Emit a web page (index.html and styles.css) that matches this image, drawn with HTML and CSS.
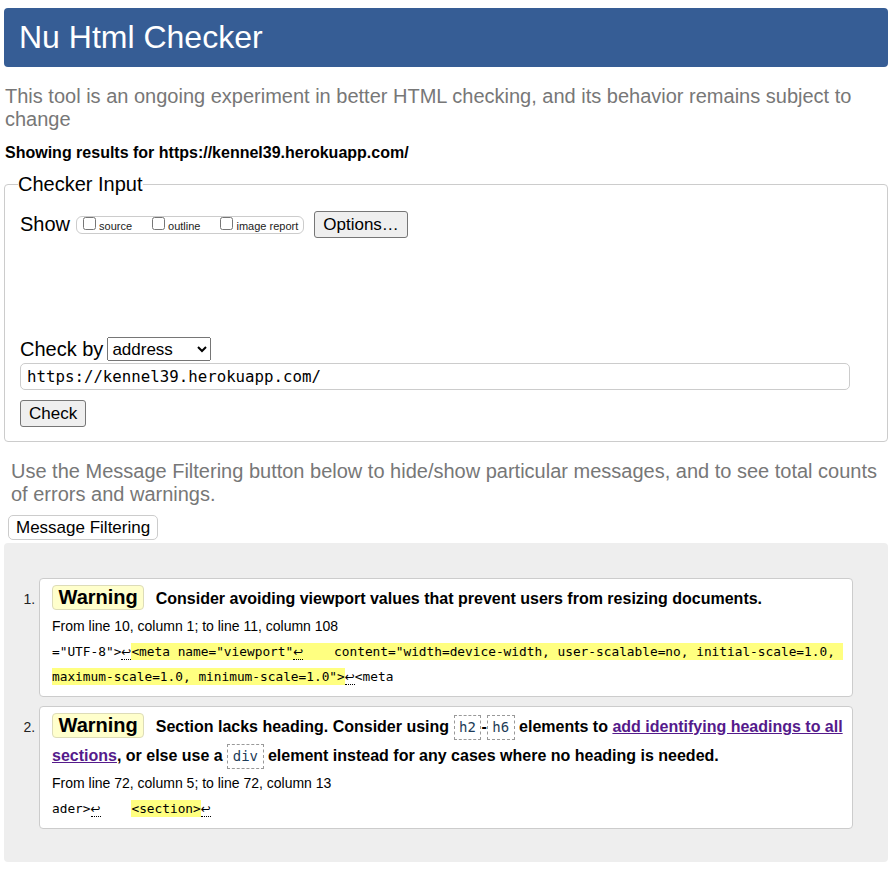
FILE: index.html
```html
<!DOCTYPE html>
<html lang="en">
<head>
<meta charset="utf-8">
<title>Nu Html Checker</title>
<link rel="stylesheet" href="styles.css">
</head>
<body>
<h1 class="title">Nu Html Checker</h1>
<p class="intro">This tool is an ongoing experiment in better HTML checking, and its behavior remains subject to change</p>
<p class="results">Showing results for https://kennel39.herokuapp.com/</p>
<fieldset class="checker">
  <legend class="checker-legend">Checker Input</legend>
  <div class="show-row">
    <span class="row-label">Show</span>
    <span class="show-group">
      <label class="opt"><input class="opt-box" type="checkbox"><span>source</span></label>
      <label class="opt"><input class="opt-box" type="checkbox"><span>outline</span></label>
      <label class="opt"><input class="opt-box" type="checkbox"><span>image report</span></label>
    </span>
    <button class="btn btn-options" type="button">Options…</button>
  </div>
  <div class="checkby-row">
    <span class="row-label">Check by</span>
    <select class="checkby-select"><option>address</option></select>
  </div>
  <input class="url" type="text" value="https://kennel39.herokuapp.com/">
  <button class="btn btn-check" type="button">Check</button>
</fieldset>
<p class="filter-note">Use the Message Filtering button below to hide/show particular messages, and to see total counts of errors and warnings.</p>
<button class="btn-filter" type="button">Message Filtering</button>
<div class="results-area">
  <ol class="messages">
    <li class="msg">
      <p class="msg-text"><strong class="badge">Warning</strong> <span>Consider avoiding viewport values that prevent users from resizing documents.</span></p>
      <p class="location">From line 10, column 1; to line 11, column 108</p>
      <p class="extract">="UTF-8"&gt;<span class="lf">↩</span><mark class="hl">&lt;meta name="viewport"<span class="lf">↩</span>    content="width=device-width, user-scalable=no, initial-scale=1.0, </mark>
<mark class="hl">maximum-scale=1.0, minimum-scale=1.0"&gt;</mark><span class="lf">↩</span>&lt;meta</p>
    </li>
    <li class="msg">
      <p class="msg-text"><strong class="badge">Warning</strong> <span>Section lacks heading. Consider using <code class="code">h2</code>-<code class="code">h6</code> elements to <a class="link" href="#">add identifying headings to all sections</a>, or else use a <code class="code">div</code> element instead for any cases where no heading is needed.</span></p>
      <p class="location">From line 72, column 5; to line 72, column 13</p>
      <p class="extract">ader&gt;<span class="lf">↩</span>    <mark class="hl">&lt;section&gt;</mark><span class="lf">↩</span></p>
    </li>
  </ol>
</div>
</body>
</html>
```
FILE: styles.css
```css
* {
  box-sizing: border-box;
}

body {
  margin: 8px 8px 8px 4px;
  font-family: "Liberation Sans", Arial, sans-serif;
  font-size: 16px;
  color: #000;
  background: #fff;
}

.title {
  margin: 0;
  padding: 11px 15px;
  background: #365d95;
  color: #fff;
  font-size: 32px;
  line-height: 37px;
  font-weight: normal;
  border-radius: 4px;
}

.intro {
  margin: 18px 0 0 1px;
  font-size: 20px;
  line-height: 23px;
  color: #777;
}

.results {
  margin: 12px 0 0 1px;
  font-size: 16px;
  line-height: 19px;
  font-weight: bold;
}

.checker {
  margin: 11px 0 0;
  padding: 15px 15px 14px;
  border: 1px solid #ccc;
  border-radius: 4px;
  min-width: 0;
}

.checker-legend {
  padding: 0;
  margin-left: -2px;
  font-size: 20px;
  line-height: 23px;
}

.show-row {
  display: flex;
  align-items: center;
  height: 27px;
}

.row-label {
  font-size: 20px;
  line-height: 23px;
}

.show-group {
  display: inline-flex;
  align-items: center;
  height: 18px;
  margin-left: 6px;
  padding: 0 5px 0 2px;
  border: 1px solid #ccc;
  border-radius: 6px;
}

.opt {
  display: inline-flex;
  align-items: baseline;
  font-size: 11px;
  line-height: 13px;
  color: #222;
}

.opt + .opt {
  margin-left: 16px;
}

.opt-box {
  margin: 0 3px 0 4px;
  width: 13px;
  height: 13px;
}

.btn {
  font-family: "Liberation Sans", Arial, sans-serif;
  font-size: 17px;
  height: 27px;
  padding: 0 8px;
  background: #efefef;
  border: 1px solid #767676;
  border-radius: 3px;
  color: #000;
}

.btn-options {
  margin-left: 10px;
}

.checkby-row {
  display: flex;
  align-items: center;
  height: 24px;
  margin-top: 99px;
}

.checkby-select {
  margin-left: 4px;
  width: 104px;
  height: 24px;
  font-family: "Liberation Sans", Arial, sans-serif;
  font-size: 17px;
  color: #000;
}

.url {
  display: block;
  margin-top: 2px;
  width: 830px;
  height: 27px;
  padding: 0 6px;
  border: 1px solid #ccc;
  border-radius: 5px;
  font-family: "DejaVu Sans Mono", monospace;
  font-size: 15.75px;
  color: #000;
}

.btn-check {
  display: block;
  margin-top: 10px;
}

.filter-note {
  margin: 18px 8px 0 7px;
  font-size: 20px;
  line-height: 23px;
  color: #777;
}

.btn-filter {
  display: block;
  margin: 9px 0 0 4px;
  height: 25px;
  padding: 0 7px;
  font-family: "Liberation Sans", Arial, sans-serif;
  font-size: 17px;
  color: #000;
  background: #fff;
  border: 1px solid #ccc;
  border-radius: 5px;
}

.results-area {
  margin-top: 3px;
  padding: 35px 35px 33px;
  background: #eee;
  border-radius: 4px;
}

.messages {
  margin: 0;
  padding: 0;
}

.msg {
  padding: 5px 8px 7px 12px;
  background: #fff;
  border: 1px solid #ccc;
  border-radius: 4px;
  font-size: 14px;
}

.msg::marker {
  color: #222;
}

.msg + .msg {
  margin-top: 9px;
}

.msg-text {
  margin: 0;
  font-size: 16px;
  line-height: 29px;
  font-weight: bold;
}

.badge {
  display: inline-block;
  margin-right: 7px;
  padding: 0 5.5px;
  font-size: 20px;
  line-height: 23px;
  background: #ffffcc;
  border: 1px solid #dddcb8;
  border-radius: 4px;
}

.code {
  display: inline-block;
  padding: 0 4.5px;
  font-family: "DejaVu Sans Mono", monospace;
  font-size: 14px;
  line-height: 23px;
  font-weight: normal;
  color: #1d3b57;
  border: 1px dashed #999;
}

.link {
  color: #551a8b;
  text-decoration: underline;
}

.location {
  margin: 0;
  font-size: 14px;
  line-height: 26px;
}

.extract {
  margin: 0;
  font-family: "DejaVu Sans Mono", monospace;
  font-size: 12.8px;
  line-height: 25px;
  white-space: pre;
}

.hl {
  padding: 1px 0;
  background: #ffff80;
  color: inherit;
}

.lf {
  font-family: "DejaVu Sans", sans-serif;
  font-size: 12px;
  line-height: 0;
  border-bottom: 1px dotted #000;
}
```
